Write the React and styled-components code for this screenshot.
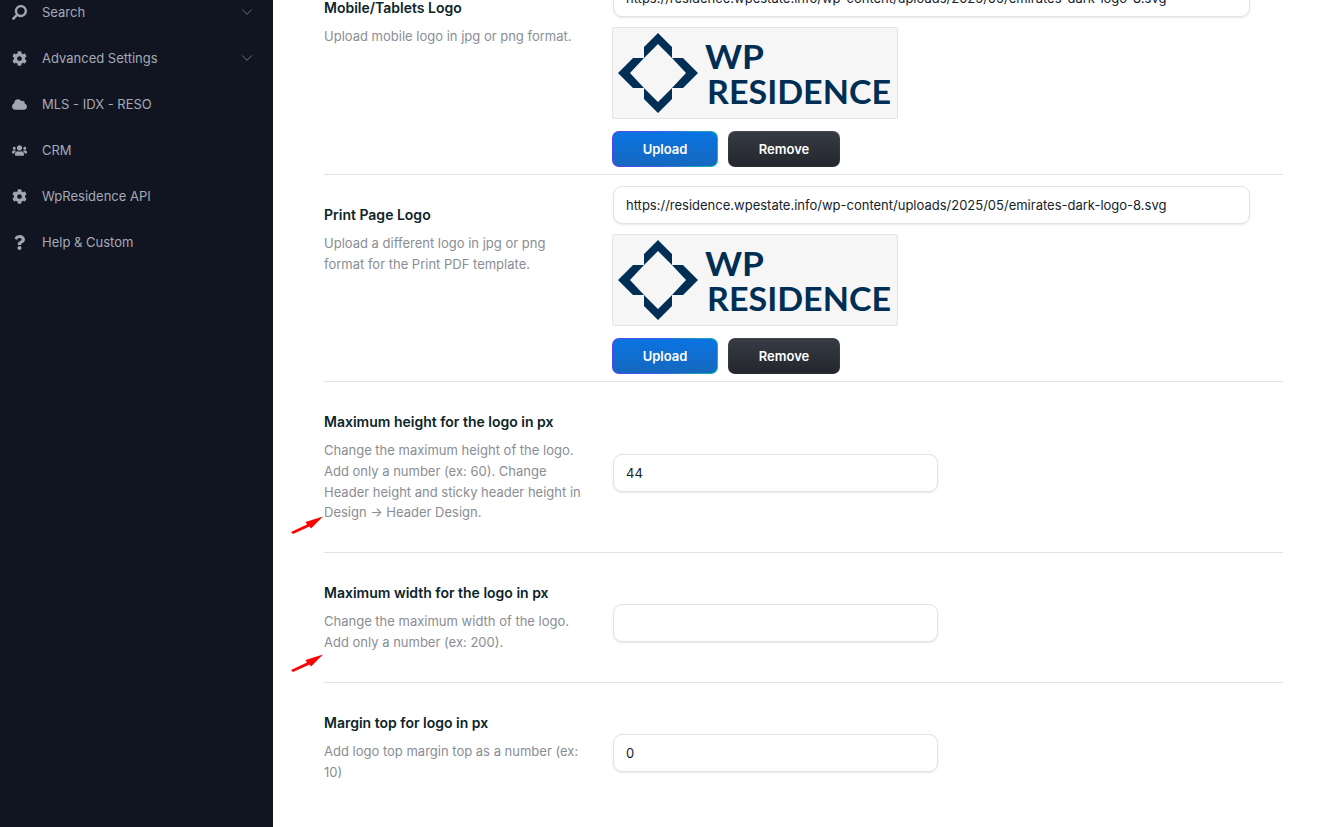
import React from 'react';
import styled, { createGlobalStyle } from 'styled-components';
import { FaCloud, FaCog, FaQuestion, FaSearch, FaUsers } from 'react-icons/fa';
import { ChevronDown } from 'lucide-react';

const GlobalStyle = createGlobalStyle`
  html, body {
    margin: 0;
    padding: 0;
    background: #fff;
    font-family: Inter, "Liberation Sans", sans-serif;
  }
  * { box-sizing: border-box; }
`;

const Page = styled.div`
  display: grid;
  grid-template-columns: 273px 1fr;
  height: 100vh;
  overflow: hidden;
`;

const Sidebar = styled.nav`
  background: #111522;
  padding-top: 0;
  margin: 0;
`;

const SideList = styled.div`
  display: flex;
  flex-direction: column;
  margin-top: -11px;
`;

const SideItem = styled.div`
  display: flex;
  align-items: center;
  height: 46px;
  padding: 0 17px 0 12px;
  color: #a5aab5;
  font-size: 13px;
  svg.main {
    width: 15px;
    height: 15px;
    color: #a0a5b0;
    flex: none;
    margin-right: 15px;
    transform: ${props => props.$flip ? 'scaleX(-1)' : 'none'};
  }
  span { flex: 1; }
`;

const Main = styled.main`
  padding: 0 52px 0 51px;
`;

const Scroller = styled.div`
  margin-top: -32px;
`;

const Row = styled.section`
  position: relative;
  display: grid;
  grid-template-columns: 289px 1fr;
  border-bottom: ${props => props.$last ? 'none' : '1px solid #e1e2e6'};
`;

const Info = styled.div`
  padding: 30px 30px 29px 0;
`;

const Title = styled.h3`
  margin: 0 0 8px;
  font-size: 14px;
  line-height: 20px;
  font-weight: 600;
  color: #0c2529;
`;

const Desc = styled.p`
  margin: 0;
  font-size: 13px;
  line-height: 20.8px;
  color: #8a8d94;
`;

const Field = styled.div`
  padding-top: 11px;
  display: flex;
  flex-direction: column;
  align-items: flex-start;
`;

const NumberField = styled.div`
  align-self: center;
  margin-top: 12px;
`;

const TextInput = styled.input`
  display: block;
  width: ${props => props.$wide ? '637px' : '325px'};
  height: 38px;
  padding: 0 12px;
  background: #fff;
  border: 1px solid #e2e2e8;
  border-radius: 9px;
  box-shadow: 0 1px 2px rgba(20, 25, 40, 0.1);
  font-family: inherit;
  font-size: 13px;
  color: #14232b;
  outline: none;
`;

const LogoBox = styled.div`
  width: 286px;
  height: 92px;
  margin: 10px 0 12px -1px;
  background: #f6f6f7;
  border: 1px solid #e4e4e8;
  border-radius: 2px;
  svg { display: block; }
`;

const Buttons = styled.div`
  display: flex;
  gap: 10px;
  margin: 0 0 7px -1px;
`;

const Button = styled.button`
  width: ${props => props.$primary ? '106px' : '112px'};
  height: 36px;
  border: 1px solid transparent;
  border-radius: 7px;
  font-family: inherit;
  font-size: 13px;
  font-weight: 600;
  color: #fff;
  background: ${props => props.$primary
    ? 'linear-gradient(180deg, #0a74e2, #1668bf) padding-box, linear-gradient(100deg, #5a3df0 0%, #3a66e0 50%, #12bfa0 100%) border-box'
    : 'linear-gradient(180deg, #373b43, #23262d) padding-box, linear-gradient(180deg, #41454d, #2a2d34) border-box'};
`;

const Arrow = styled.svg`
  position: absolute;
  left: -36px;
  bottom: ${props => props.$bottom}px;
  width: 38px;
  height: 22px;
`;

const navItems = [
  { label: 'Search', icon: FaSearch, flip: true, more: true },
  { label: 'Advanced Settings', icon: FaCog, more: true },
  { label: 'MLS - IDX - RESO', icon: FaCloud },
  { label: 'CRM', icon: FaUsers },
  { label: 'WpResidence API', icon: FaCog },
  { label: 'Help & Custom', icon: FaQuestion },
];

const LOGO_URL = 'https://residence.wpestate.info/wp-content/uploads/2025/05/emirates-dark-logo-8.svg';

const Logo = () => (
  <svg width="284" height="90" viewBox="0 0 284 90">
    <g fill="#002e55">
      <polygon points="45,5 59,19 59,30 45,16 31,30 31,19" />
      <polygon points="45,85 59,71 59,60 45,74 31,60 31,71" />
      <polygon points="5,45 20,30 31,30 17,45 31,60 20,60" />
      <polygon points="85,45 70,30 59,30 73,45 59,60 70,60" />
      <text x="92" y="41" fontFamily="Lato, sans-serif" fontWeight="700" fontSize="33" textLength="59" lengthAdjust="spacingAndGlyphs">WP</text>
      <text x="94" y="76" fontFamily="Lato, sans-serif" fontWeight="700" fontSize="33" textLength="184" lengthAdjust="spacingAndGlyphs">RESIDENCE</text>
    </g>
  </svg>
);

const RedArrow = ({ bottom }) => (
  <Arrow $bottom={bottom} viewBox="0 0 38 22">
    <path d="M3 19 L19 11.5 L17.5 9 L35 3.5 L23 15.5 L21.5 13.5 L5 21 Z" fill="#f00" />
  </Arrow>
);

const UploadRow = ({ title, lines }) => (
  <Row>
    <Info>
      <Title>{title}</Title>
      <Desc>{lines}</Desc>
    </Info>
    <Field>
      <TextInput $wide readOnly value={LOGO_URL} />
      <LogoBox><Logo /></LogoBox>
      <Buttons>
        <Button $primary>Upload</Button>
        <Button>Remove</Button>
      </Buttons>
    </Field>
  </Row>
);

const NumberRow = ({ title, lines, value, last, arrow }) => (
  <Row $last={last}>
    <Info>
      <Title>{title}</Title>
      <Desc>{lines}</Desc>
    </Info>
    <NumberField>
      <TextInput readOnly value={value} />
    </NumberField>
    {arrow !== undefined && <RedArrow bottom={arrow} />}
  </Row>
);

export default function App() {
  return (
    <Page>
      <GlobalStyle />
      <Sidebar>
        <SideList>
          {navItems.map(item => (
            <SideItem key={item.label} $flip={item.flip}>
              <item.icon className="main" />
              <span>{item.label}</span>
              {item.more && <ChevronDown size={18} strokeWidth={1} color="#8b909b" />}
            </SideItem>
          ))}
        </SideList>
      </Sidebar>
      <Main>
        <Scroller>
          <UploadRow title="Mobile/Tablets Logo" lines="Upload mobile logo in jpg or png format." />
          <UploadRow title="Print Page Logo" lines="Upload a different logo in jpg or png format for the Print PDF template." />
          <NumberRow
            title="Maximum height for the logo in px"
            lines="Change the maximum height of the logo. Add only a number (ex: 60). Change Header height and sticky header height in Design → Header Design."
            value="44"
            arrow={17}
          />
          <NumberRow
            title="Maximum width for the logo in px"
            lines="Change the maximum width of the logo. Add only a number (ex: 200)."
            value=""
            arrow={9}
          />
          <NumberRow
            title="Margin top for logo in px"
            lines="Add logo top margin top as a number (ex: 10)"
            value="0"
            last
          />
        </Scroller>
      </Main>
    </Page>
  );
}
